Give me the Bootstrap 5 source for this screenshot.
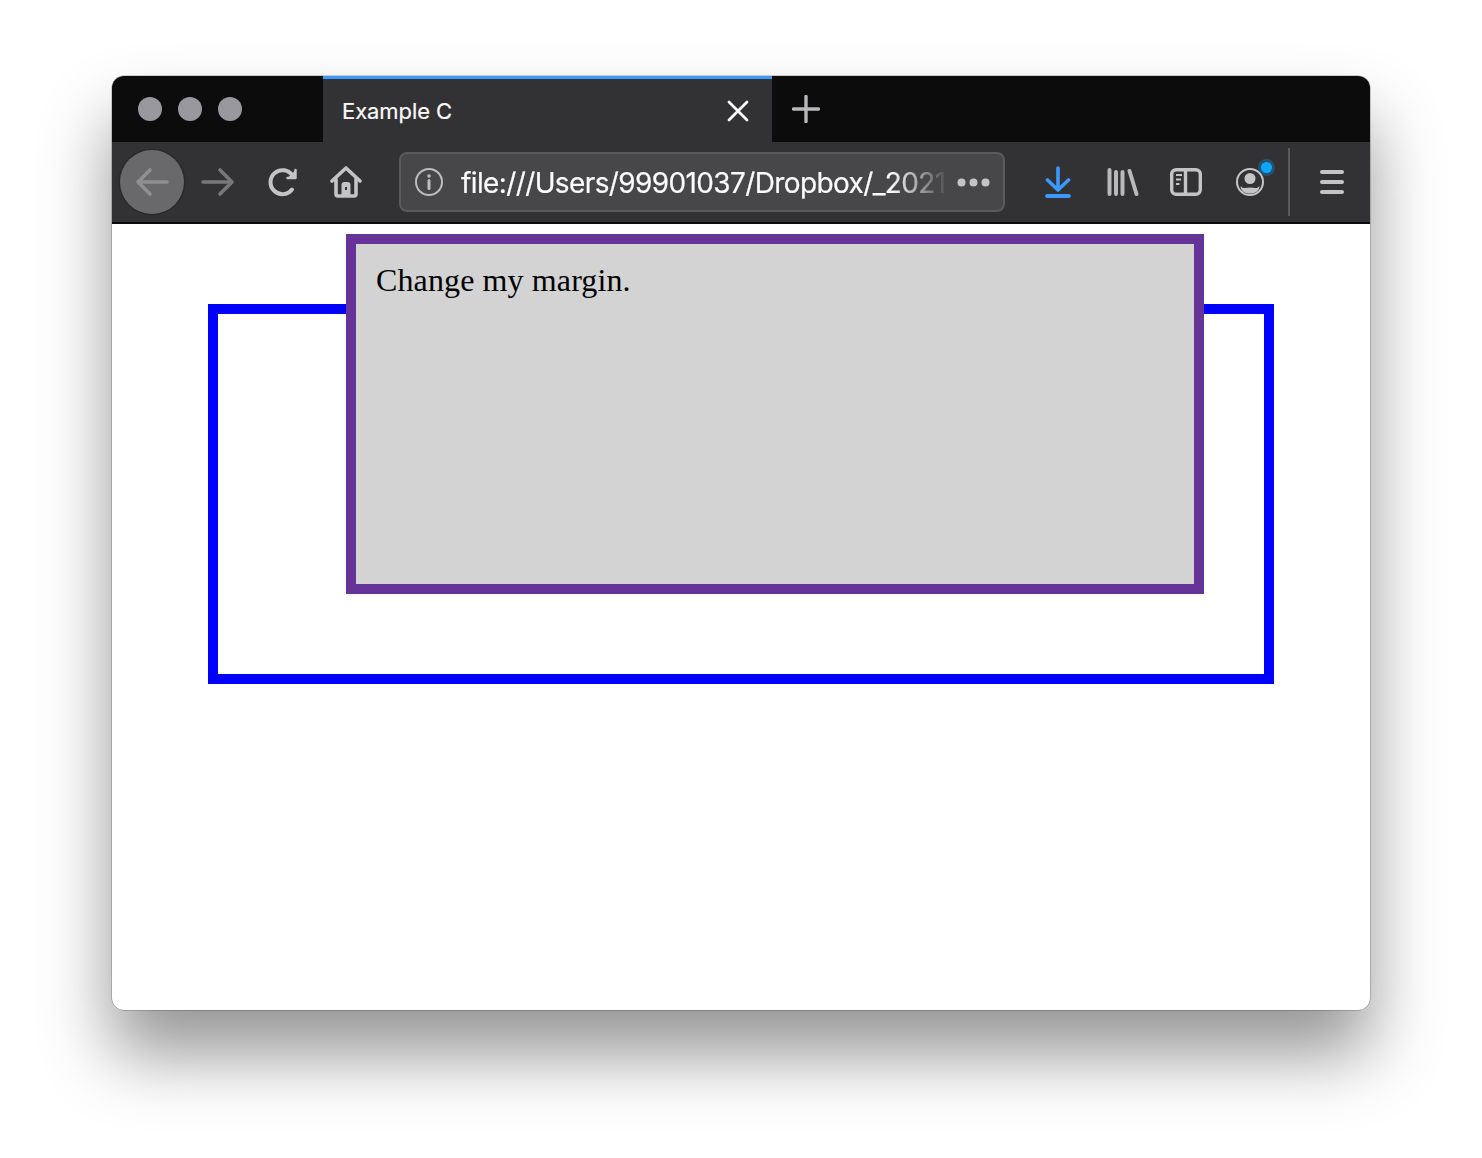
<!DOCTYPE html>
<html lang="en"><head><meta charset="utf-8"><title>Example C</title>
<link href="https://cdn.jsdelivr.net/npm/bootstrap@5.3.0/dist/css/bootstrap.min.css" rel="stylesheet">
<style>
html,body{height:100%;background:#fff}
body{padding:76px 112px 148px;overflow:hidden;font-family:Inter,"Liberation Sans",sans-serif}
.win{width:1258px;height:934px;border-radius:12px;background:#fff;overflow:hidden;box-shadow:0 0 0 .5px rgba(0,0,0,.35),0 44px 70px 0 rgba(0,0,0,.42)}
.titlebar{height:66px;background:#0c0c0d}
.lights{width:211px;padding-left:26px;gap:16px}
.light{width:24px;height:24px;border-radius:50%;background:#99989e}
.tabx{width:449px;background:#323234;border-top:3px solid #3b99fc;padding:0 23px 0 19px;color:#fbfbfb;font-size:22px}
.tabx span{margin-top:2px;letter-spacing:-.08px;-webkit-text-stroke:.2px #fbfbfb}
.plus{width:68px}
.toolbar{height:80px;background:#323234;padding-left:8px}
.tb-sep{height:2px;background:#0c0c0d}
.backb{width:64px;height:64px;border-radius:50%;background:#69696b;box-shadow:0 0 0 1.5px #2a2a2c}
.ico{display:block;flex:none}
.slot{width:64px;height:64px}
.urlbar{width:606px;height:60px;background:#474749;border:2px solid #5a5a5c;border-radius:8px;color:#fbfbfb;font-size:28px;padding-left:14px}
.urltext{flex:none;margin:2px 0 0 18px;width:484px;white-space:nowrap;letter-spacing:-.62px;-webkit-text-stroke:.2px #fbfbfb;-webkit-mask-image:linear-gradient(90deg,#000 430px,rgba(0,0,0,.1) 482px);mask-image:linear-gradient(90deg,#000 430px,rgba(0,0,0,.1) 482px)}
.vsep{width:2px;height:68px;background:#5b5b5d}
.page{height:786px;padding-top:80px}
.outer{margin:0 96px;height:380px;border:10px solid #00f}
.inner{margin:-80px 60px 0 128px;height:360px;border:10px solid #639;background:#d3d3d3;padding:20px;font-family:"Liberation Serif",serif;font-size:32px;line-height:32px;letter-spacing:.12px;color:#000}
</style></head><body>
<div class="win d-flex flex-column">
 <div class="titlebar d-flex flex-shrink-0">
  <div class="lights d-flex align-items-center"><i class="light"></i><i class="light"></i><i class="light"></i></div>
  <div class="tabx d-flex align-items-center justify-content-between"><span>Example C</span>
   <svg class="ico" width="22" height="22" viewBox="0 0 22 22" fill="none" stroke="#fbfbfb" stroke-width="2.8" stroke-linecap="round"><path d="M2 2 20 20M20 2 2 20"/></svg></div>
  <div class="plus d-flex align-items-center justify-content-center"><svg class="ico" width="28" height="28" viewBox="0 0 28 28" fill="none" stroke="#b8b8ba" stroke-width="3.400" stroke-linecap="round"><path d="M14 1.500v25M1.500 14h25"/></svg></div>
 </div>
 <div class="toolbar d-flex align-items-center flex-shrink-0">
  <div class="backb d-flex align-items-center justify-content-center"><svg class="ico" width="34" height="30" viewBox="0 0 34 30" fill="none" stroke="#8f8f91" stroke-width="3.600" stroke-linecap="round" stroke-linejoin="round"><path d="M32 15H3M15 3 3 15l12 12"/></svg></div>
  <div class="slot d-flex align-items-center justify-content-center" style="margin-left:2px"><svg class="ico" width="34" height="30" viewBox="0 0 34 30" fill="none" stroke="#78787a" stroke-width="3.600" stroke-linecap="round" stroke-linejoin="round"><path d="M2 15h29M19 3l12 12-12 12"/></svg></div>
  <div class="slot d-flex align-items-center justify-content-center" style="margin-left:1px"><svg class="ico" width="32" height="32" viewBox="0 0 32 32" fill="none" stroke="#c4c4c6" stroke-width="4" stroke-linecap="round" stroke-linejoin="round"><path d="M25 23.500a12 12 0 1 1 .5-14"/><path d="M28.500 4v8h-8" fill="#c4c4c6" stroke-width="2.500"/></svg></div>
  <div class="slot d-flex align-items-center justify-content-center" style="margin-left:-1px"><svg class="ico" width="32" height="32" viewBox="0 0 32 32"><path d="M2 15 16 2l14 13M6 13v15a2 2 0 0 0 2 2h16a2 2 0 0 0 2-2V13" fill="none" stroke="#c4c4c6" stroke-width="3.600" stroke-linecap="round" stroke-linejoin="round"/><path fill="#c4c4c6" fill-rule="evenodd" d="M11.500 30V19a3 3 0 0 1 3-3h3a3 3 0 0 1 3 3v11ZM15 21v3h2v-3Z"/></svg></div>
  <div class="urlbar d-flex align-items-center" style="margin-left:21px">
   <svg class="ico" width="28" height="28" viewBox="0 0 28 28" fill="none" stroke="#bdbdbf" stroke-width="2"><circle cx="14" cy="14" r="13"/><path d="M14 12.500v8" stroke-width="3" stroke-linecap="round"/><circle cx="14" cy="8" r="1.800" fill="#bdbdbf" stroke="none"/></svg>
   <div class="urltext">file:///Users/99901037/Dropbox/_2021</div>
   <svg class="ico" style="margin-left:12px" width="33" height="9" viewBox="0 0 33 9" fill="#c4c4c6"><circle cx="4.500" cy="4.500" r="4"/><circle cx="16.500" cy="4.500" r="4"/><circle cx="28.500" cy="4.500" r="4"/></svg>
  </div>
  <div class="slot d-flex align-items-center justify-content-center" style="margin-left:21px"><svg class="ico" width="26" height="32" viewBox="0 0 26 32" fill="none" stroke="#3b99fc" stroke-width="3.600" stroke-linecap="round" stroke-linejoin="round"><path d="M13 2v22M2.500 14 13 24l10.500-10"/><path d="M2 30h22" stroke-width="3.800"/></svg></div>
  <div class="slot d-flex align-items-center justify-content-center" style="margin-left:1px"><svg class="ico" width="32" height="28" viewBox="0 0 32 28" fill="none" stroke="#b9b9bb" stroke-width="4" stroke-linecap="round"><path d="M2.500 2v24M9 4v22M15.500 4v22M22.500 3l7 23"/></svg></div>
  <div class="slot d-flex align-items-center justify-content-center" style="margin-left:-1px"><svg class="ico" width="32" height="28" viewBox="0 0 32 28" fill="none" stroke="#c4c4c6" stroke-width="3.400"><rect x="1.700" y="1.700" width="28.600" height="24.600" rx="4.500"/><path d="M15.500 2v24"/><path d="M6 7h6M6 11.500h5M6 16h3.500" stroke-width="2"/></svg></div>
  <div class="slot d-flex align-items-center justify-content-center position-relative"><svg class="ico" width="28" height="28" viewBox="0 0 28 28" fill="none"><circle cx="14" cy="14" r="13" stroke="#c4c4c6" stroke-width="2"/><circle cx="14" cy="10.500" r="5.500" fill="#c4c4c6"/><path d="M4.500 18c3 3.500 6 1.500 9.500 1.500S20.500 21.500 23.500 18c0 5-4.500 7.500-9.500 7.500S4.500 23 4.500 18Z" fill="#c4c4c6"/></svg>
   <i class="position-absolute rounded-circle" style="width:11px;height:11px;background:#0ca6fb;right:10px;top:12px;box-shadow:0 0 0 3px rgba(12,160,245,.3)"></i></div>
  <div class="vsep" style="margin-left:6px"></div>
  <div class="slot d-flex align-items-center justify-content-center" style="margin-left:10px"><svg class="ico" width="24" height="24" viewBox="0 0 24 24" fill="none" stroke="#c4c4c6" stroke-width="4" stroke-linecap="round"><path d="M2 2h20M2 12h20M2 22h20"/></svg></div>
 </div>
 <div class="tb-sep flex-shrink-0"></div>
 <div class="page">
  <div class="outer"><div class="inner">Change my margin.</div></div>
 </div>
</div>
<script src="https://cdn.jsdelivr.net/npm/bootstrap@5.3.0/dist/js/bootstrap.bundle.min.js"></script>
</body></html>
